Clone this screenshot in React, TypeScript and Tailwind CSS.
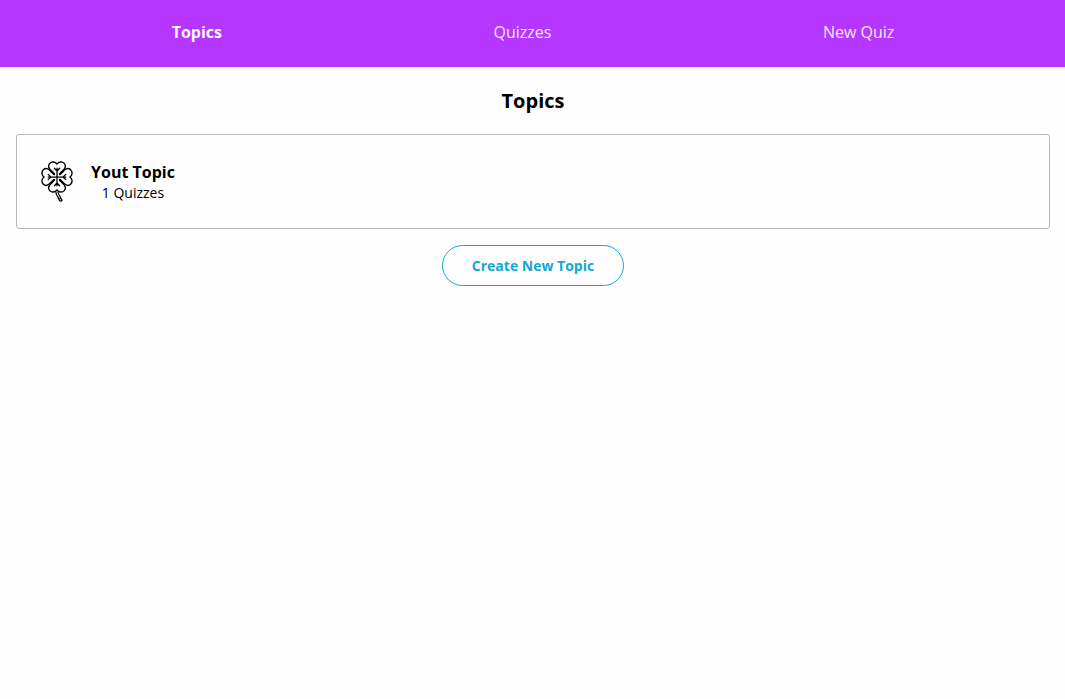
const LEAF_ANGLES = [0, 90, 180, 270];

function CloverIcon() {
  return (
    <svg
      width="34"
      height="44"
      viewBox="-17 -17 34 44"
      fill="none"
      stroke="#000"
      strokeLinecap="round"
      strokeLinejoin="round"
      aria-hidden="true"
    >
      {LEAF_ANGLES.map((angle) => (
        <g key={angle} transform={`rotate(${angle})`}>
          <path
            d="M-5.8 -6.2C-8.6 -8.9 -8.9 -11.8 -7.3 -13.6C-5.3 -15.8 -1.6 -15.5 0 -12.9C1.6 -15.5 5.3 -15.8 7.3 -13.6C8.9 -11.8 8.6 -8.9 5.8 -6.2"
            strokeWidth="1.4"
          />
          <path d="M2.9 -2.9L6.1 -6.1" strokeWidth="2.2" />
          <path d="M0 0V-8.8M0 -6L-2.6 -8.8M0 -6L2.6 -8.8" strokeWidth="1.25" />
        </g>
      ))}
      <path d="M-1.1 15C-1 17.2 -.4 18.6 1 19.8L1.4 21.6M1 15C1 16.8 1.8 18.1 3 19.2L3.6 21" strokeWidth="1.2" />
      <path d="M1.9 21.2C1.9 22.9 2.8 24.1 3.9 24.1C5.2 24.1 5.2 22.6 3.8 21.5" strokeWidth="1.4" />
    </svg>
  );
}

export default function App() {
  return (
    <div className="min-h-screen bg-[#fefefe] font-['Open_Sans',sans-serif] text-black">
      <nav className="h-[67px] bg-[#b536ff]">
        <ul className="flex justify-center gap-[271.5px] pt-5 pl-px text-base leading-6 text-[#fbe3ff]">
          <li className="font-bold text-[#fff5ff]"><a href="#topics">Topics</a></li>
          <li><a href="#quizzes">Quizzes</a></li>
          <li><a href="#new-quiz">New Quiz</a></li>
        </ul>
      </nav>
      <main className="pr-[15px] pl-4">
        <h1 className="pt-5 text-center text-xl leading-7 font-bold">Topics</h1>
        <ul className="mt-[19px]">
          <li className="flex h-[95px] items-center rounded-[3px] border border-[#b7b7bd] pl-[23px]">
            <CloverIcon />
            <div className="ml-[17px] text-center">
              <h3 className="text-base leading-[22px] font-bold">Yout Topic</h3>
              <p className="text-sm leading-5">1 Quizzes</p>
            </div>
          </li>
        </ul>
        <div className="mt-4 flex justify-center">
          <button className="h-[41px] w-[182px] rounded-full border border-[#0fa9d6] text-sm font-bold text-[#0fa9d6]">
            Create New Topic
          </button>
        </div>
      </main>
    </div>
  );
}
